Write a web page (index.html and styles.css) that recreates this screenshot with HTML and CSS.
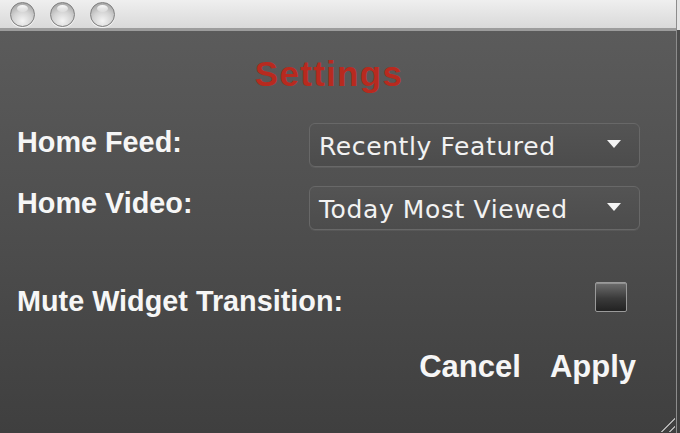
FILE: index.html
```
<!DOCTYPE html>
<html>
<head>
<meta charset="utf-8">
<link rel="stylesheet" href="styles.css">
</head>
<body>
<div class="window">
  <div class="titlebar">
    <span class="light"></span>
    <span class="light"></span>
    <span class="light"></span>
  </div>
  <div class="content">
    <h1 class="title">Settings</h1>
    <div class="row row-feed">
      <span class="label">Home Feed:</span>
      <div class="select"><span class="select-text">Recently Featured</span><span class="arrow"></span></div>
    </div>
    <div class="row row-video">
      <span class="label">Home Video:</span>
      <div class="select"><span class="select-text">Today Most Viewed</span><span class="arrow"></span></div>
    </div>
    <div class="row row-mute">
      <span class="label">Mute Widget Transition:</span>
      <span class="checkbox"></span>
    </div>
    <div class="buttons">
      <span class="btn">Cancel</span>
      <span class="btn">Apply</span>
    </div>
    <div class="grip"></div>
  </div>
</div>
</body>
</html>
```
FILE: styles.css
```
html, body {
  margin: 0;
  padding: 0;
}
body {
  width: 680px;
  height: 433px;
  overflow: hidden;
  background: linear-gradient(to bottom, #e4e4e4 0, #e4e4e4 30px, #4c4c4c 30px, #3e3e3e 100%);
  font-family: "Liberation Sans", Arial, sans-serif;
}
.window {
  width: 676px;
  height: 433px;
  border-right: 1px solid #8c8c8c;
  display: flex;
  flex-direction: column;
}
.titlebar {
  height: 26px;
  flex: none;
  background: linear-gradient(to bottom, #efefef, #d9d9d9);
  border-bottom: 3px solid #9c9c9c;
  display: flex;
  align-items: flex-start;
  gap: 15px;
  padding: 2px 0 0 10px;
}
.light {
  position: relative;
  width: 23px;
  height: 23px;
  border-radius: 50%;
  border: 1px solid #7e7e7e;
  background: radial-gradient(circle at 50% 78%, #f4f4f4 0%, #d4d4d4 45%, #a6a6a6 85%, #8e8e8e 100%);
  box-shadow: 0 1px 1px rgba(255,255,255,0.8);
}
.light::before {
  content: "";
  position: absolute;
  left: 6px;
  top: 2px;
  width: 11px;
  height: 7px;
  border-radius: 50%;
  background: linear-gradient(to bottom, rgba(255,255,255,0.95), rgba(255,255,255,0.2));
}
.content {
  position: relative;
  flex: 1;
  background: linear-gradient(to bottom, #5b5b5b 0%, #4f4f4f 45%, #3f3f3f 100%);
  padding: 23px 0 0 17px;
  display: flex;
  flex-direction: column;
}
.title {
  margin: 0 35px 0 0;
  font-size: 35px;
  line-height: 40px;
  letter-spacing: 1.3px;
  font-weight: bold;
  color: #b82a1f;
  text-align: center;
}
.row {
  display: flex;
  justify-content: space-between;
  align-items: flex-start;
}
.row-feed {
  margin-top: 29px;
}
.row-video {
  margin-top: 19px;
}
.row-mute {
  margin-top: 52px;
}
.label {
  font-size: 28.8px;
  font-weight: bold;
  color: #f6f6f6;
  line-height: 38px;
}
.row-video .label {
  line-height: 34px;
}
.select {
  width: 302px;
  height: 42px;
  margin-right: 36px;
  border: 1px solid #686868;
  border-radius: 6px;
  background: linear-gradient(to bottom, #545454, #4c4c4c);
  box-shadow: 0 1px 0 rgba(255,255,255,0.06);
  display: flex;
  align-items: center;
  justify-content: space-between;
  padding: 0 18px 0 9px;
}
.select-text {
  font-family: "DejaVu Sans", sans-serif;
  font-size: 25px;
  letter-spacing: 0.6px;
  line-height: 42px;
  padding-top: 3px;
  color: #f2f2f2;
}
.arrow {
  width: 0;
  height: 0;
  border-left: 7px solid transparent;
  border-right: 7px solid transparent;
  border-top: 8px solid #f4f4f4;
  margin-top: -2px;
}
.checkbox {
  width: 30px;
  height: 28px;
  margin-right: 49px;
  border: 1px solid #9a9a9a;
  border-radius: 2px;
  background: linear-gradient(to bottom, #6e6e6e 0%, #3a3a3a 55%, #222 100%);
  box-shadow: inset 0 1px 0 rgba(255,255,255,0.25);
}
.buttons {
  display: flex;
  justify-content: flex-end;
  gap: 29px;
  margin-top: 29px;
  margin-right: 40px;
}
.btn {
  font-size: 31px;
  line-height: 36px;
  font-weight: bold;
  color: #f6f6f6;
}
.grip {
  position: absolute;
  right: 1px;
  bottom: 1px;
  width: 18px;
  height: 18px;
  background: repeating-linear-gradient(135deg, transparent 0, transparent 3px, #b0b0b0 3px, #b0b0b0 4.5px, transparent 4.5px, transparent 6px);
  clip-path: polygon(100% 0, 100% 100%, 0 100%);
}
```
